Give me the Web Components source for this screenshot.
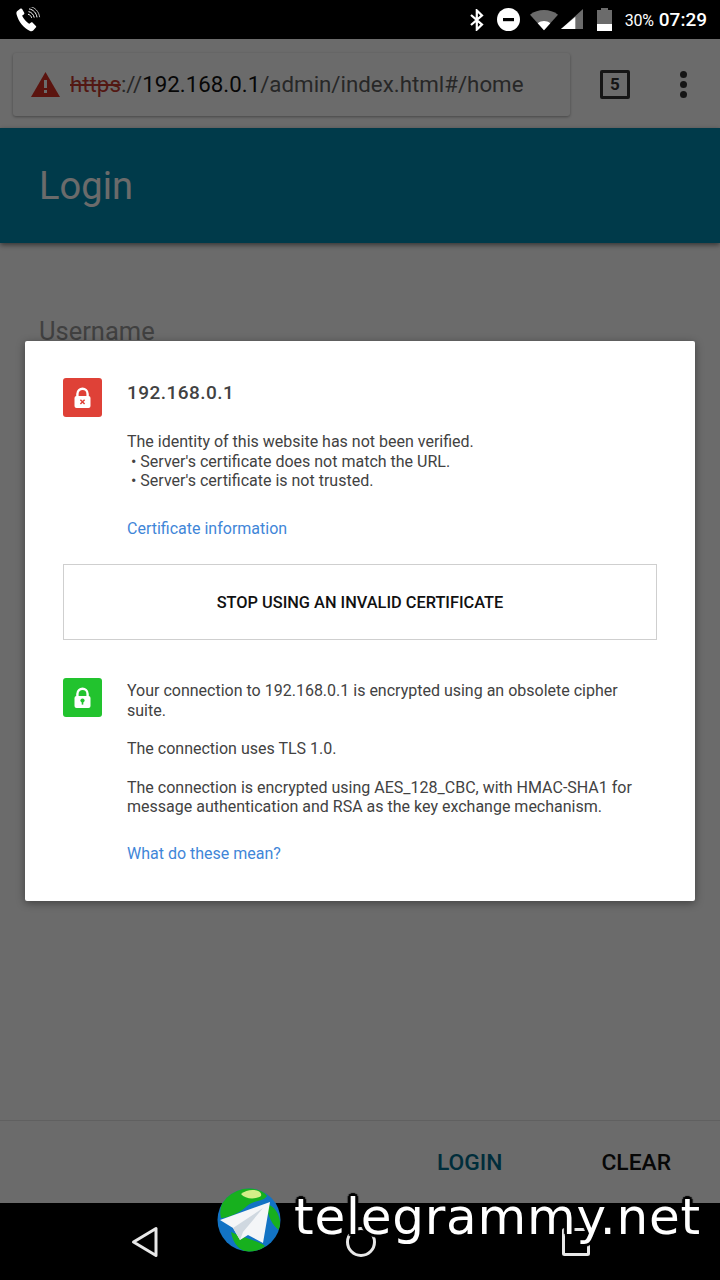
<!DOCTYPE html>
<html>
<head>
<meta charset="utf-8">
<title>Certificate dialog</title>
<style>
  html, body { margin: 0; padding: 0; background: #000; }
  body { width: 720px; height: 1280px; overflow: hidden; font-family: Roboto, "Liberation Sans", sans-serif; }
</style>
</head>
<body>
<phone-screen>
  <status-bar slot="status"></status-bar>
  <browser-toolbar slot="toolbar" host-name="192.168.0.1" url-path="/admin/index.html#/home" tab-count="5"></browser-toolbar>
  <login-page slot="page"></login-page>
  <nav-bar slot="nav"></nav-bar>
  <security-dialog slot="dialog" host-name="192.168.0.1">
    <security-section slot="identity" kind="bad" link="Certificate information">
      <div class="title">192.168.0.1</div>
      <p>The identity of this website has not been verified.<br>&nbsp;• Server's certificate does not match the URL.<br>&nbsp;• Server's certificate is not trusted.</p>
    </security-section>
    <security-section slot="connection" kind="good" link="What do these mean?">
      <p>Your connection to 192.168.0.1 is encrypted using an obsolete cipher suite.</p>
      <p>The connection uses TLS 1.0.</p>
      <p>The connection is encrypted using AES_128_CBC, with HMAC-SHA1 for message authentication and RSA as the key exchange mechanism.</p>
    </security-section>
  </security-dialog>
  <site-watermark slot="watermark"></site-watermark>
</phone-screen>

<script>
/**
 * Outer frame: status bar, browser chrome, page, nav bar, plus the overlays
 */
class PhoneScreen extends HTMLElement {
  constructor() {
    super();
    this.attachShadow({ mode: "open" });
  }

  connectedCallback() {
    this.shadowRoot.innerHTML = `
      <style>
        :host { display: flex; flex-direction: column; position: relative; width: 720px; height: 1280px; overflow: hidden; }
        .under { display: flex; flex-direction: column; flex: 1; min-height: 0; }
        .scrim { position: absolute; left: 0; right: 0; top: 39px; bottom: 77px; background: rgba(0, 0, 0, 0.58); }
        .dialog { position: absolute; left: 25px; top: 341px; }
      </style>
      <slot name="status"></slot>
      <div class="under">
        <slot name="toolbar"></slot>
        <slot name="page"></slot>
      </div>
      <slot name="nav"></slot>
      <div class="scrim"></div>
      <div class="dialog"><slot name="dialog"></slot></div>
      <slot name="watermark"></slot>
    `;
  }
}

class StatusBar extends HTMLElement {
  constructor() {
    super();
    this.attachShadow({ mode: "open" });
  }

  connectedCallback() {
    this.shadowRoot.innerHTML = `
      <style>
        :host { display: flex; align-items: center; height: 39px; background: #000; color: #fff; padding: 0 13px 0 16px; box-sizing: border-box; flex: none; }
        svg { display: block; flex: none; }
        .phone { margin-right: auto; }
        .bt { margin-right: 13px; }
        .dnd { margin-right: 10px; }
        .wifi { margin-right: 3px; }
        .cell { margin-right: 14px; }
        .batt { margin-right: 13px; }
        .pct { font-size: 16px; letter-spacing: -0.2px; margin-right: 5px; margin-top: 1px; }
        .time { font-size: 19px; font-weight: 500; }
      </style>
      <svg class="phone" width="26" height="26" viewBox="0 0 26 26">
        <path fill="#fff" d="M1 4.2 L4.6 1.6 C5.2 1.2 5.8 1.4 6.1 2 L8.2 5.8 C8.5 6.4 8.4 7 7.8 7.4 L6.2 8.6 C6.6 10.8 10.8 15.8 13.4 16.8 L15 15.6 C15.6 15.2 16.2 15.2 16.7 15.7 L19.9 18.9 C20.4 19.4 20.4 20 19.8 20.5 L17.2 23.4 C16.4 24.2 15.2 24.4 14 23.9 C8 21.4 2.4 14.4 0.6 7.4 C0.3 6.2 0.3 5 1 4.2 Z"/>
        <g fill="none" stroke="#fff" stroke-width="1">
          <path d="M12.5 4.6 C15.6 5.2 17.6 7.6 18.2 10.6"/>
          <path d="M13 1.9 C17.4 2.6 20.4 6 21 10.4"/>
          <path d="M13.5 -0.6 C19 0.2 23 4.6 23.6 10.2" stroke-opacity=".7"/>
          <path d="M12 7.2 C13.8 7.6 15.2 9 15.6 10.8"/>
        </g>
      </svg>
      <svg class="bt" width="14" height="22" viewBox="0 0 14 22">
        <path fill="none" stroke="#fff" stroke-width="2.2" d="M1 6 L12 15.6 L6.8 20.6 V1.4 L12 6.4 L1 16"/>
      </svg>
      <svg class="dnd" width="23" height="23" viewBox="0 0 23 23">
        <circle cx="11.5" cy="11.5" r="11.5" fill="#fff"/>
        <rect x="6" y="10" width="11" height="3.2" fill="#000"/>
      </svg>
      <svg class="wifi" width="28" height="22" viewBox="0 0 29 21">
        <path fill="#6b6b6b" d="M0 5 C8 -1.4 21 -1.4 29 5 L14.5 21 Z"/>
        <path fill="#fff" d="M8 13.8 C11.6 10.8 17.4 10.8 21 13.8 L14.5 21 Z"/>
      </svg>
      <svg class="cell" width="22" height="21" viewBox="0 0 23 22">
        <path fill="#6b6b6b" d="M23 0 V21 H0 Z"/>
        <path fill="#fff" d="M15 8 V21 H0 Z"/>
      </svg>
      <svg class="batt" width="15" height="23" viewBox="0 0 15 23">
        <path fill="#6b6b6b" d="M4 0 H11 V2 H15 V23 H0 V2 H4 Z"/>
        <rect x="0" y="16" width="15" height="7" fill="#fff"/>
      </svg>
      <span class="pct">30%</span>
      <span class="time">07:29</span>
    `;
  }
}

class BrowserToolbar extends HTMLElement {
  constructor() {
    super();
    this.attachShadow({ mode: "open" });
  }

  connectedCallback() {
    const host = this.getAttribute("host-name");
    const path = this.getAttribute("url-path");
    const tabs = this.getAttribute("tab-count");
    this.shadowRoot.innerHTML = `
      <style>
        :host { display: flex; align-items: center; height: 89px; flex: none; background: #fff; box-sizing: border-box; padding: 1px 0 0 13px; }
        .omnibox { display: flex; align-items: center; width: 557px; height: 63px; box-sizing: border-box; padding-left: 18px; background: #fff; border-radius: 3px; box-shadow: 0 1px 3px rgba(0,0,0,.35); font-size: 22.3px; color: #5e5e5e; white-space: nowrap; }
        svg { display: block; flex: none; }
        .warn { margin-right: 10px; }
        .scheme { color: #c5392e; text-decoration: line-through; }
        .host { color: #111; }
        .tabs { display: flex; align-items: center; justify-content: center; width: 24px; height: 23px; border: 3px solid #333; border-radius: 2px; font-size: 17px; font-weight: 700; color: #333; margin-left: 30px; }
        .menu { display: flex; flex-direction: column; gap: 3px; margin-left: 50px; }
        .menu i { display: block; width: 7px; height: 7px; border-radius: 50%; background: #333; }
      </style>
      <div class="omnibox">
        <svg class="warn" width="29" height="25" viewBox="0 0 29 25">
          <path fill="#d93025" d="M14.5 0 L29 25 H0 Z"/>
          <rect x="13" y="8" width="3" height="8" fill="#fff"/>
          <rect x="13" y="18" width="3" height="3" fill="#fff"/>
        </svg>
        <span class="scheme">https</span><span>://</span><span class="host">${host}</span><span>${path}</span>
      </div>
      <div class="tabs">${tabs}</div>
      <div class="menu"><i></i><i></i><i></i></div>
    `;
  }
}

class LoginPage extends HTMLElement {
  constructor() {
    super();
    this.attachShadow({ mode: "open" });
  }

  connectedCallback() {
    this.shadowRoot.innerHTML = `
      <style>
        :host { display: flex; flex-direction: column; flex: 1; min-height: 0; background: #fff; }
        header { height: 115px; flex: none; display: flex; align-items: center; padding-left: 39px; background: #008ab0; color: #fff; font-size: 38px; letter-spacing: 0.1px; box-shadow: 0 2px 5px rgba(0,0,0,.5); position: relative; }
        main { flex: 1; padding: 73px 39px 0; font-size: 25.5px; color: #999; }
        footer { height: 83px; flex: none; box-sizing: border-box; border-top: 1px solid #e4e4e4; display: flex; align-items: center; justify-content: flex-end; gap: 99px; padding: 0 49px 0 0; font-size: 22.8px; font-weight: 500; }
        .login { color: #006d8c; }
        .clear { color: #111; }
      </style>
      <header><span>Login</span></header>
      <main>Username</main>
      <footer><span class="login">LOGIN</span><span class="clear">CLEAR</span></footer>
    `;
  }
}

class NavBar extends HTMLElement {
  constructor() {
    super();
    this.attachShadow({ mode: "open" });
  }

  connectedCallback() {
    this.shadowRoot.innerHTML = `
      <style>
        :host { display: flex; justify-content: space-between; align-items: center; height: 77px; flex: none; background: #000; box-sizing: border-box; padding: 0 130px 0 131px; }
        svg { display: block; }
      </style>
      <svg width="28" height="32" viewBox="0 0 28 32"><path fill="none" stroke="#e8e8e8" stroke-width="3" stroke-linejoin="round" d="M25 2.5 V29.5 L2.5 16 Z"/></svg>
      <svg width="30" height="30" viewBox="0 0 30 30"><circle cx="15" cy="15" r="13.5" fill="none" stroke="#e8e8e8" stroke-width="3"/></svg>
      <svg width="28" height="28" viewBox="0 0 28 28"><rect x="1.5" y="1.5" width="25" height="25" rx="1" fill="none" stroke="#e8e8e8" stroke-width="3"/></svg>
    `;
  }
}

class SecurityDialog extends HTMLElement {
  constructor() {
    super();
    this.attachShadow({ mode: "open" });
  }

  connectedCallback() {
    this.shadowRoot.innerHTML = `
      <style>
        :host { display: flex; flex-direction: column; width: 670px; height: 560px; box-sizing: border-box; padding: 37px 38px 0; background: #fff; border-radius: 2px; box-shadow: 0 2px 8px rgba(0,0,0,.4); color: #424242; font-size: 16px; line-height: 19.5px; }
        .stop { display: flex; align-items: center; justify-content: center; height: 76px; box-sizing: border-box; border: 1px solid #cfcfcf; padding-top: 2px; margin: 26px 0 38px; font-size: 16.35px; font-weight: 500; color: #111; }
      </style>
      <slot name="identity"></slot>
      <div class="stop">STOP USING AN INVALID CERTIFICATE</div>
      <slot name="connection"></slot>
    `;
  }
}

class SecuritySection extends HTMLElement {
  constructor() {
    super();
    this.attachShadow({ mode: "open" });
  }

  connectedCallback() {
    const good = this.getAttribute("kind") === "good";
    const mark = good
      ? `<circle cx="19.5" cy="22.5" r="2.1" fill="#22c32e"/><rect x="18.7" y="23" width="1.6" height="3.6" fill="#22c32e"/>`
      : `<path d="M17.4 21.8 L21.6 26 M21.6 21.8 L17.4 26" stroke="#df4137" stroke-width="1.5"/>`;
    this.shadowRoot.innerHTML = `
      <style>
        :host { display: grid; grid-template-columns: 39px 1fr; column-gap: 25px; }
        :host([kind="good"]) .body { padding-top: 3px; }
        :host([kind="good"]) a { margin-top: 27px; }
        .badge { display: block; width: 39px; height: 39px; }
        .body { min-width: 0; }
        a { display: block; color: #3f86d8; text-decoration: none; margin-top: 28px; }
        ::slotted(.title) { font-size: 19px; font-weight: 500; letter-spacing: 0.45px; line-height: 28px; margin: 1px 0 25px; }
        ::slotted(p) { margin: 0 0 19px; }
        ::slotted(p:last-of-type) { margin-bottom: 0; }
      </style>
      <svg class="badge" viewBox="0 0 39 39">
        <rect width="39" height="39" rx="3" fill="${good ? "#22c32e" : "#df4137"}"/>
        <path d="M14.4 19 V16 C14.4 9 24.6 9 24.6 16 V19" fill="none" stroke="#fff" stroke-width="2.4"/>
        <rect x="11.5" y="18" width="16" height="12" rx="2" fill="#fff"/>
        ${mark}
      </svg>
      <div class="body">
        <slot></slot>
        <a>${this.getAttribute("link")}</a>
      </div>
    `;
  }
}

class SiteWatermark extends HTMLElement {
  constructor() {
    super();
    this.attachShadow({ mode: "open" });
  }

  connectedCallback() {
    this.shadowRoot.innerHTML = `
      <style>
        :host { position: absolute; left: 217px; top: 1188px; display: flex; align-items: center; gap: 13px; }
        svg { display: block; flex: none; }
        span { font-family: "DejaVu Sans", sans-serif; font-size: 50px; line-height: 58px; color: #fff; letter-spacing: 0.8px; margin-top: -6px;
          text-shadow: 3px 0 1px #000, -3px 0 1px #000, 0 3px 1px #000, 0 -3px 1px #000, 2px 2px 1px #000, -2px 2px 1px #000, 2px -2px 1px #000, -2px -2px 1px #000; }
      </style>
      <svg width="64" height="64" viewBox="0 0 64 64">
        <defs><clipPath id="g"><circle cx="32" cy="32" r="31.5"/></clipPath></defs>
        <circle cx="32" cy="32" r="31.5" fill="#1273c4"/>
        <g clip-path="url(#g)">
          <path fill="#17b01e" d="M10 8 C20 -2 42 -4 50 8 C46 14 36 12 30 18 C24 24 12 30 4 30 C2 22 4 14 10 8 Z"/>
          <path fill="#d4ee88" d="M24 6 C32 -1 46 2 44 8 C38 12 28 11 24 6 Z"/>
          <path fill="#17b01e" d="M50 16 C58 18 66 30 62 42 C56 38 50 28 50 16 Z"/>
          <path fill="#17b01e" d="M14 44 C26 50 40 52 48 58 C40 68 18 68 14 44 Z"/>
        </g>
        <path fill="#f4f6f8" d="M53 14 L46 55 L31 47 L23 52 L16 40 L3 32 Z"/>
        <path fill="#cfd8e0" d="M16 40 L46 20 L26 44 L23 52 Z"/>
      </svg>
      <span>telegrammy.net</span>
    `;
  }
}

customElements.define("phone-screen", PhoneScreen);
customElements.define("status-bar", StatusBar);
customElements.define("browser-toolbar", BrowserToolbar);
customElements.define("login-page", LoginPage);
customElements.define("nav-bar", NavBar);
customElements.define("security-dialog", SecurityDialog);
customElements.define("security-section", SecuritySection);
customElements.define("site-watermark", SiteWatermark);
</script>
</body>
</html>
